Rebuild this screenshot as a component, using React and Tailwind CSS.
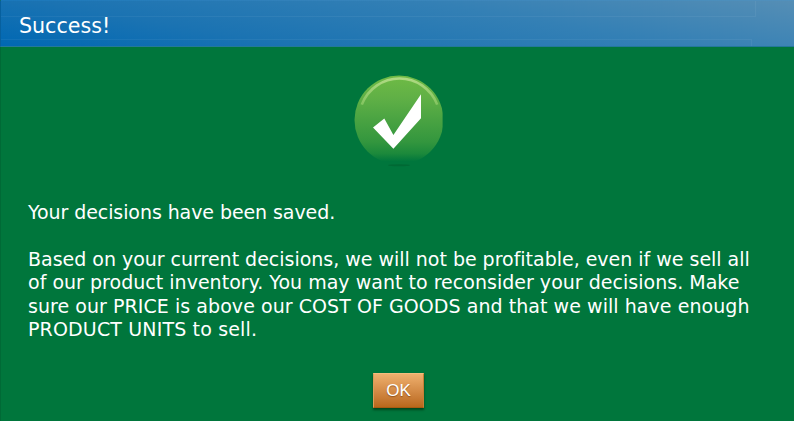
import React from 'react';

const lines = [
  { text: 'Based on your current decisions, we will not be profitable, even if we sell all', spacing: 'tracking-[-0.015px]' },
  { text: 'of our product inventory. You may want to reconsider your decisions. Make', spacing: 'tracking-[0.02px]' },
  { text: 'sure our PRICE is above our COST OF GOODS and that we will have enough', spacing: 'tracking-[0.055px]' },
  { text: 'PRODUCT UNITS to sell.', spacing: 'tracking-[0.15px]' },
];

const SuccessIcon = () => (
  <svg className="h-[94px] w-[90px]" viewBox="0 0 90 94" fill="none">
    <defs>
      <linearGradient id="disc" x1="0" y1="2" x2="0" y2="90" gradientUnits="userSpaceOnUse">
        <stop offset="0" stopColor="#6fbb45" />
        <stop offset="0.25" stopColor="#60b046" />
        <stop offset="0.75" stopColor="#33963e" />
        <stop offset="0.88" stopColor="#1c893b" />
        <stop offset="0.97" stopColor="#00763c" />
        <stop offset="1" stopColor="#00763c" />
      </linearGradient>
      <linearGradient id="shine" x1="0" y1="4" x2="0" y2="32" gradientUnits="userSpaceOnUse">
        <stop offset="0" stopColor="#b0da84" />
        <stop offset="1" stopColor="#8fcb68" stopOpacity="0.75" />
      </linearGradient>
      <clipPath id="edge">
        <rect width="88.6" height="94" />
      </clipPath>
    </defs>
    <g clipPath="url(#edge)">
      <circle cx="45" cy="46" r="44.5" fill="url(#disc)" />
      <path d="M7.8 30.6A40.6 41.4 0 0 1 83.2 30.6" stroke="url(#shine)" strokeWidth="2.6" />
      <ellipse cx="45" cy="91.2" rx="11" ry="1" fill="#00602f" opacity="0.6" />
    </g>
    <path d="M19 53.6L30.3 44.6L39.4 61L67 20.2V44.3L39.4 74.8Z" fill="#fff" />
  </svg>
);

const App = () => {
  return (
    <div className="flex h-[421px] w-[794px] flex-col overflow-hidden bg-[#00763c] font-['DejaVu_Sans',sans-serif] text-white shadow-[inset_1px_0_0_#006a36]">
      <header className="relative flex h-[47px] shrink-0 items-center border-t border-b border-l border-t-white/10 border-b-[#24789a] border-l-[#07609e] bg-[linear-gradient(10deg,#0068b3_0%,#1b73b2_28%,#3480b5_65%,#558eb5_100%)] pl-[18px] text-[20.6px]">
        <div className="absolute top-0 left-0 h-[16px] w-[755px] border-r border-b border-white/5"></div>
        <div className="absolute bottom-0 left-0 h-[7px] w-[751px] border-t border-r border-white/5"></div>
        <h1 className="pt-[5px]">Success!</h1>
      </header>

      <div className="flex flex-col items-center pt-[27px]">
        <div className="pl-[4px]">
          <SuccessIcon />
        </div>
        <div className="mt-[33px] w-full pl-[28px] text-[19px] leading-[23.4px] whitespace-nowrap">
          <p className="mb-[23.4px] tracking-[-0.08px]">Your decisions have been saved.</p>
          {lines.map((line) => (
            <p key={line.text} className={line.spacing}>{line.text}</p>
          ))}
        </div>
        <button className="mt-[32px] ml-[3px] h-[35px] w-[51px] border border-t-[#f4bd7e] border-r-[#c67f36] border-b-[#a75b12] border-l-[#dc9c58] bg-linear-to-b from-[#efb06d] to-[#b9681b] font-['Liberation_Sans',sans-serif] text-[17px] shadow-[0_2px_2px_rgba(0,40,10,0.6)] [text-shadow:0_1px_1px_rgba(90,40,0,0.5)]">
          OK
        </button>
      </div>
    </div>
  );
};

export default App;
